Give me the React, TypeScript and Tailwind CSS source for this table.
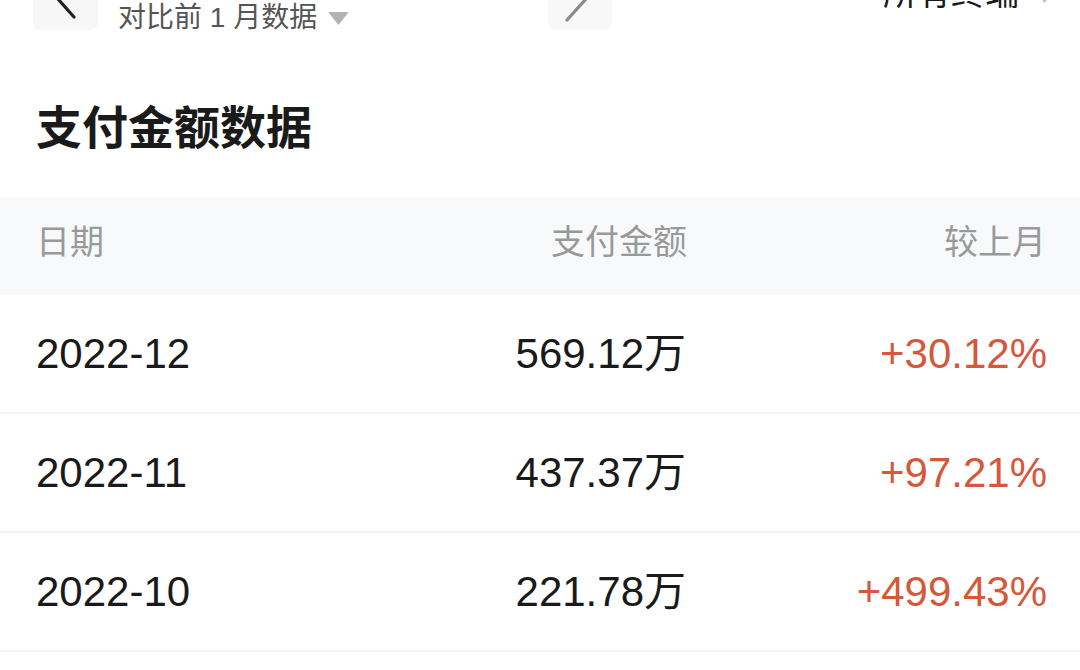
import React from 'react';

interface Row {
  month: string;
  amount: string;
  change: string;
}

const rows: Row[] = [
  { month: '2022-12', amount: '569.12万', change: '+30.12%' },
  { month: '2022-11', amount: '437.37万', change: '+97.21%' },
  { month: '2022-10', amount: '221.78万', change: '+499.43%' },
];

const Caret: React.FC<{ className?: string }> = ({ className }) => (
  <svg viewBox="0 0 24 16" className={className} fill="currentColor">
    <path d="M1 1h22L12 15z" />
  </svg>
);

const App: React.FC = () => {
  return (
    <div className="w-[1080px] h-[670px] overflow-hidden bg-white font-['Liberation_Sans','Noto_Sans_CJK_SC',sans-serif]">
      {/* Top bar, scrolled partly out of view */}
      <div className="-mt-[44px] h-[74px] flex">
        <div className="ml-[33px] w-[65px] h-full bg-[#f7f7f7] rounded-lg flex items-center justify-center">
          <svg viewBox="0 0 40 40" className="w-[40px] h-[40px] mt-[12px] -ml-[4px] text-[#222]" fill="none" stroke="currentColor" strokeWidth="3.2" strokeLinecap="round">
            <path d="M30 2L14 20l16 18" />
          </svg>
        </div>
        <div className="ml-[20px] w-[430px] flex flex-col justify-end">
          <div className="flex items-center gap-[10px] leading-[28px] mb-[-2px]">
            <span className="text-[28px] text-[#555]">对比前 1 月数据</span>
            <Caret className="w-[23px] h-[15px] text-[#b3b3b3]" />
          </div>
        </div>
        <div className="w-[64px] h-full bg-[#f8f8f8] rounded-lg flex items-center justify-center">
          <svg viewBox="0 0 40 60" className="w-[40px] h-[60px] mt-[14px] -ml-[6px] text-[#8a8a8a]" fill="none" stroke="currentColor" strokeWidth="3.2" strokeLinecap="round">
            <path d="M10 6l18 20L10 46" transform="translate(0 4)" />
          </svg>
        </div>
        <div className="flex-1 flex justify-end items-center pr-[30px] gap-[20px]">
          <span className="text-[34px] text-[#1a1a1a]">所有终端</span>
          <Caret className="w-[11px] h-[8px] mt-[14px] text-[#c8c8c8]" />
        </div>
      </div>

      {/* Title */}
      <h1 className="mt-[70px] mb-[41px] pl-[36px] text-[46px] leading-[56px] font-bold text-[#1a1a1a]">
        支付金额数据
      </h1>

      {/* Table */}
      <div className="flex h-[98px] items-center bg-[#f8f9fb] pl-[36px] pr-[34px] pb-[8px] text-[34px] text-[#999]">
        <div className="flex-1">日期</div>
        <div className="w-[300px] text-right">支付金额</div>
        <div className="w-[359px] text-right">较上月</div>
      </div>
      {rows.map((r) => (
        <div
          key={r.month}
          className="flex h-[119px] items-center border-b-2 border-[#f3f3f3] pl-[36px] pr-[33px] text-[42px] text-[#1a1a1a]"
        >
          <div className="flex-1">{r.month}</div>
          <div className="w-[300px] text-right">{r.amount}</div>
          <div className="w-[361px] text-right text-[#d5583b]">{r.change}</div>
        </div>
      ))}
    </div>
  );
};

export default App;
